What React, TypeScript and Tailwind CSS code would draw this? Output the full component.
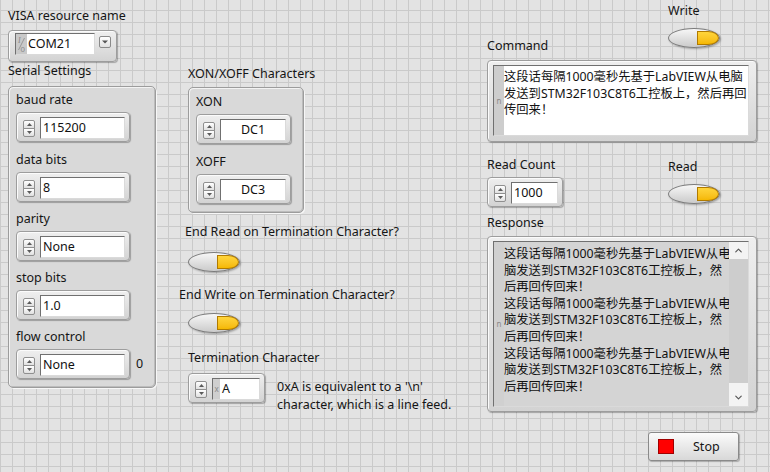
import React from "react";
import { ChevronUp, ChevronDown } from "lucide-react";

const frame =
  "rounded-[4px] border border-[#9d9d9d] bg-linear-to-b from-[#efefef] to-[#d3d3d3] shadow-[inset_1px_1px_0_#fbfbfb,1px_1px_1px_rgba(0,0,0,0.28)]";
const sunken =
  "border border-t-[#707070] border-l-[#707070] border-r-[#dadada] border-b-[#dadada]";
const cluster =
  "rounded-[5px] border border-[#9c9c9c] bg-[#d9d9d9] shadow-[inset_1px_1px_0_#f3f3f3,inset_-1px_-1px_0_#bcbcbc,1px_1px_0_#f7f7f7]";

function Label({ children, className = "" }: { children: React.ReactNode; className?: string }) {
  return (
    <div className={`h-[16px] leading-[16px] text-[12.5px] text-[#151515] whitespace-nowrap ${className}`}>
      {children}
    </div>
  );
}

function Spinner() {
  const btn =
    "h-[9px] w-[12px] border border-[#8f8f8f] bg-linear-to-b from-[#ffffff] to-[#e0e0e0] flex items-center justify-center";
  return (
    <div className="flex flex-col shrink-0">
      <div className={`${btn} rounded-t-[2px]`}>
        <svg width="5" height="3" viewBox="0 0 5 3">
          <path d="M0 3L2.5 0L5 3Z" fill="#5a5a5a" />
        </svg>
      </div>
      <div className={`${btn} -mt-px rounded-b-[2px]`}>
        <svg width="5" height="3" viewBox="0 0 5 3">
          <path d="M0 0L2.5 3L5 0Z" fill="#5a5a5a" />
        </svg>
      </div>
    </div>
  );
}

function NumCtl({
  value,
  boxW,
  center = false,
  prefix = false,
}: {
  value: string;
  boxW: string;
  center?: boolean;
  prefix?: boolean;
}) {
  return (
    <div className={`flex items-center w-fit pt-[4px] pb-[2px] pl-[6px] pr-[4px] ${frame}`}>
      <Spinner />
      <div className={`ml-[5px] h-[22px] flex bg-white ${sunken} ${boxW}`}>
        {prefix && (
          <div className="w-[7px] bg-[#cfcfcf] text-[8px] leading-[20px] text-[#8a8a8a] text-center">x</div>
        )}
        <div
          className={`flex-1 text-[12.5px] leading-[20px] text-[#111] whitespace-nowrap ${
            center ? "text-center" : "pl-[2px]"
          }`}
        >
          {value}
        </div>
      </div>
    </div>
  );
}

function Toggle() {
  return (
    <div className="w-[52px] h-[20px] rounded-[50%] border border-[#7c7c7c] bg-linear-to-b from-[#f7f7f7] to-[#cbcbcb] shadow-[1px_1px_2px_rgba(0,0,0,0.3)] flex items-center justify-end">
      <div className="w-[22px] h-[14px] bg-linear-to-b from-[#ffd53a] to-[#f5b800] border border-[#b07a00] rounded-r-[50%]" />
    </div>
  );
}

const cmdLines = [
  "这段话每隔1000毫秒先基于LabVIEW从电脑",
  "发送到STM32F103C8T6工控板上，然后再回",
  "传回来！",
];
const respBlock = [
  "这段话每隔1000毫秒先基于LabVIEW从电",
  "脑发送到STM32F103C8T6工控板上，然",
  "后再回传回来！",
];
const respLines = [...respBlock, ...respBlock, ...respBlock];

export default function App() {
  return (
    <div className="w-[770px] h-[472px] overflow-hidden flex items-start font-['Noto_Sans','Noto_Sans_CJK_SC',sans-serif] text-[#151515] [background-color:#e3e3e3] [background-image:linear-gradient(to_right,#cacaca_1px,transparent_1px),linear-gradient(to_bottom,#cacaca_1px,transparent_1px)] [background-size:12px_12px] [background-position:0_10px]">
      {/* Column 1 */}
      <div className="ml-[8px] w-[148px] flex flex-col">
        <Label className="mt-[8px]">VISA resource name</Label>
        <div className={`mt-[6px] w-[109px] h-[32px] flex items-start pt-[2px] pl-[6px] ${frame}`}>
          <div className={`flex h-[22px] w-[80px] bg-white ${sunken}`}>
            <div className="w-[11px] bg-[#c9c9c9] flex items-center justify-center">
              <svg width="9" height="18" viewBox="0 0 9 18">
                <text x="1" y="8" fontSize="8" fill="#8a8a8a" fontFamily="Liberation Serif, serif" fontStyle="italic">
                  I
                </text>
                <line x1="7.5" y1="3" x2="1.5" y2="15" stroke="#8a8a8a" strokeWidth="0.8" />
                <text x="3.5" y="16.5" fontSize="8" fill="#8a8a8a" fontFamily="Liberation Sans, sans-serif">
                  0
                </text>
              </svg>
            </div>
            <div className="flex-1 pl-[1px] text-[12.5px] leading-[20px] text-[#111]">COM21</div>
          </div>
          <div className="ml-[4px] mt-[3px] w-[12px] h-[12px] border border-[#8a8a8a] rounded-[2px] bg-linear-to-b from-white to-[#e0e0e0] flex items-center justify-center">
            <svg width="6" height="4" viewBox="0 0 6 4">
              <path d="M0 0.5L3 3.5L6 0.5Z" fill="#555" />
            </svg>
          </div>
        </div>
        <Label className="mt-[1px]">Serial Settings</Label>
        <div className={`mt-[7px] w-[148px] h-[302px] pt-[5px] pl-[7px] flex flex-col ${cluster}`}>
          <Label>baud rate</Label>
          <div className="mt-[4px]">
            <NumCtl value="115200" boxW="w-[85px]" />
          </div>
          <Label className="mt-[10px]">data bits</Label>
          <div className="mt-[4px]">
            <NumCtl value="8" boxW="w-[85px]" />
          </div>
          <Label className="mt-[9px]">parity</Label>
          <div className="mt-[4px]">
            <NumCtl value="None" boxW="w-[85px]" />
          </div>
          <Label className="mt-[9px]">stop bits</Label>
          <div className="mt-[4px]">
            <NumCtl value="1.0" boxW="w-[85px]" />
          </div>
          <Label className="mt-[9px]">flow control</Label>
          <div className="mt-[4px] flex items-center">
            <NumCtl value="None" boxW="w-[85px]" />
            <span className="ml-[6px] text-[12.5px] leading-[16px]">0</span>
          </div>
        </div>
      </div>

      {/* Column 2 */}
      <div className="ml-[32px] w-[280px] flex flex-col">
        <Label className="mt-[66px]">XON/XOFF Characters</Label>
        <div className={`mt-[5px] w-[116px] h-[126px] pt-[6px] pl-[7px] flex flex-col ${cluster}`}>
          <Label>XON</Label>
          <div className="mt-[4px]">
            <NumCtl value="DC1" boxW="w-[66px]" center />
          </div>
          <Label className="mt-[10px]">XOFF</Label>
          <div className="mt-[4px]">
            <NumCtl value="DC3" boxW="w-[66px]" center />
          </div>
        </div>
        <Label className="mt-[11px] -ml-[3px]">End Read on Termination Character?</Label>
        <div className="mt-[12px]">
          <Toggle />
        </div>
        <Label className="mt-[15px] -ml-[9px]">End Write on Termination Character?</Label>
        <div className="mt-[10px]">
          <Toggle />
        </div>
        <Label className="mt-[17px]">Termination Character</Label>
        <div className="mt-[7px] flex items-start">
          <NumCtl value="A" boxW="w-[48px]" prefix />
          <div className="ml-[12px] mt-[5px] text-[12.5px] leading-[17.5px] whitespace-nowrap">
            <div>0xA is equivalent to a {"'\\n'"}</div>
            <div>character, which is a line feed.</div>
          </div>
        </div>
      </div>

      {/* Column 3 */}
      <div className="ml-[19px] w-[270px] flex flex-col">
        <div className="flex items-start justify-between">
          <Label className="mt-[38px]">Command</Label>
          <div className="mt-[3px] mr-[37px] flex flex-col">
            <Label>Write</Label>
            <div className="mt-[9px]">
              <Toggle />
            </div>
          </div>
        </div>
        <div className={`mt-[6px] h-[82px] pt-[4px] pl-[5px] pr-[7px] flex ${frame}`}>
          <div className={`flex flex-1 min-w-0 h-[71px] ${sunken}`}>
            <div className="w-[10px] shrink-0 bg-[#cdcdcd] flex items-center justify-center">
              <span className="text-[8px] leading-[8px] text-[#8a8a8a]">n</span>
            </div>
            <div className="flex-1 min-w-0 bg-white pt-[3px] text-[12.3px] leading-[16.7px] text-[#111] whitespace-nowrap overflow-hidden">
              {cmdLines.map((l, i) => (
                <div key={i}>{l}</div>
              ))}
            </div>
          </div>
        </div>
        <div className="mt-[15px] flex items-start justify-between">
          <div className="flex flex-col">
            <Label>Read Count</Label>
            <div className="mt-[4px]">
              <NumCtl value="1000" boxW="w-[47px]" />
            </div>
          </div>
          <div className="mt-[2px] mr-[37px] flex flex-col">
            <Label>Read</Label>
            <div className="mt-[9px]">
              <Toggle />
            </div>
          </div>
        </div>
        <Label className="mt-[8px]">Response</Label>
        <div className={`mt-[5px] h-[176px] pt-[4px] pl-[5px] pr-[7px] flex ${frame}`}>
          <div className={`flex flex-1 min-w-0 h-[166px] ${sunken}`}>
            <div className="w-[10px] shrink-0 bg-[#d0d0d0] flex items-center justify-center">
              <span className="text-[8px] leading-[8px] text-[#8a8a8a]">n</span>
            </div>
            <div className="flex-1 min-w-0 bg-[#d4d4d4] pt-[4px] text-[12.3px] leading-[16.6px] text-[#111] whitespace-nowrap overflow-hidden">
              {respLines.map((l, i) => (
                <div key={i}>{l}</div>
              ))}
            </div>
            <div className="w-[19px] shrink-0 flex flex-col bg-[#f3f3f3]">
              <div className="h-[17px] flex items-center justify-center">
                <ChevronUp size={11} strokeWidth={2.5} color="#555" />
              </div>
              <div className="h-[124px] bg-[#cdcdcd]" />
              <div className="flex-1" />
              <div className="h-[17px] flex items-center justify-center">
                <ChevronDown size={11} strokeWidth={2.5} color="#555" />
              </div>
            </div>
          </div>
        </div>
        <div className="self-end mr-[18px] mt-[20px] w-[91px] h-[29px] rounded-[3px] border border-[#8a8a8a] bg-linear-to-b from-[#fbfbfb] to-[#d8d8d8] shadow-[1px_1px_1px_rgba(0,0,0,0.25)] flex items-center pl-[9px]">
          <div className="w-[16px] h-[15px] bg-[#ff0000] border border-[#a00000]" />
          <span className="ml-[19px] text-[12.5px] leading-[16px] text-[#151515]">Stop</span>
        </div>
      </div>
    </div>
  );
}
